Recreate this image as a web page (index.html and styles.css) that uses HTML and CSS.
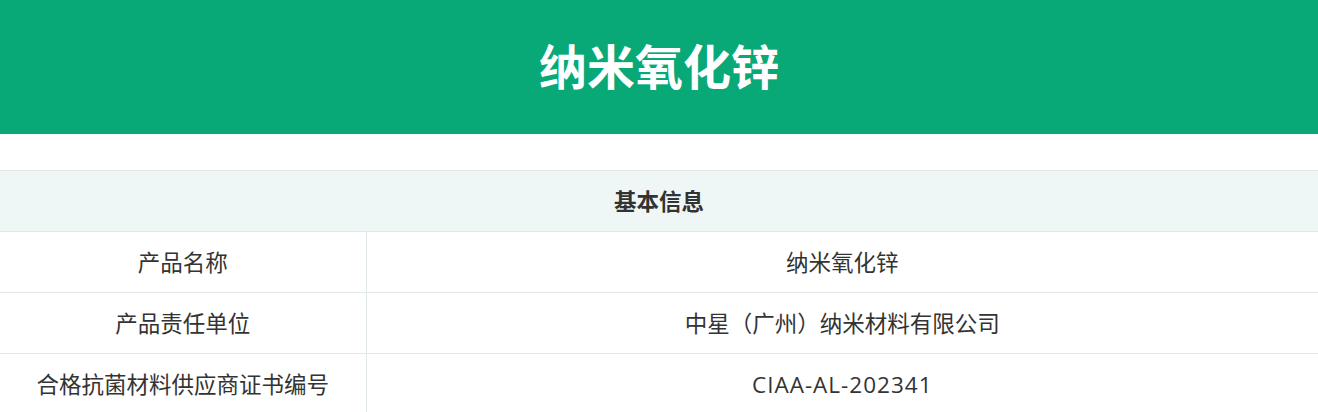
FILE: index.html
```html
<!DOCTYPE html>
<html lang="zh">
<head>
<meta charset="utf-8">
<title>纳米氧化锌</title>
<link rel="stylesheet" href="styles.css">
</head>
<body>
<header class="banner"><h1 class="title">纳米氧化锌</h1></header>
<main class="content">
<table class="info">
<colgroup><col class="col-label"><col class="col-value"></colgroup>
<thead>
<tr><th colspan="2" class="section">基本信息</th></tr>
</thead>
<tbody>
<tr><td class="label">产品名称</td><td class="value">纳米氧化锌</td></tr>
<tr><td class="label">产品责任单位</td><td class="value">中星（广州）纳米材料有限公司</td></tr>
<tr><td class="label">合格抗菌材料供应商证书编号</td><td class="value code">CIAA-AL-202341</td></tr>
</tbody>
</table>
</main>
</body>
</html>
```
FILE: styles.css
```css
html, body {
  margin: 0;
  padding: 0;
  background: #ffffff;
  font-family: "Open Sans", "Noto Sans CJK SC", sans-serif;
  color: #333333;
}
.banner {
  background: #08a877;
  height: 134px;
  display: flex;
  align-items: center;
  justify-content: center;
}
.title {
  margin: 0;
  color: #ffffff;
  font-size: 48px;
  font-weight: 700;
  line-height: 1;
}
.content {
  padding-top: 36px;
}
.info {
  width: 100%;
  border-collapse: collapse;
  table-layout: fixed;
  font-size: 22.5px;
}
.col-label { width: 366px; }
.info th, .info td {
  border: 1px solid #e0e8e8;
  height: 60px;
  padding: 0;
  text-align: center;
  vertical-align: middle;
  line-height: 1.2;
}
.info tr > :first-child { border-left: none; }
.info tr > :last-child { border-right: none; }
.section {
  background: #eef7f5;
  font-weight: 700;
  color: #333333;
}
.code { letter-spacing: 1px; }
```
